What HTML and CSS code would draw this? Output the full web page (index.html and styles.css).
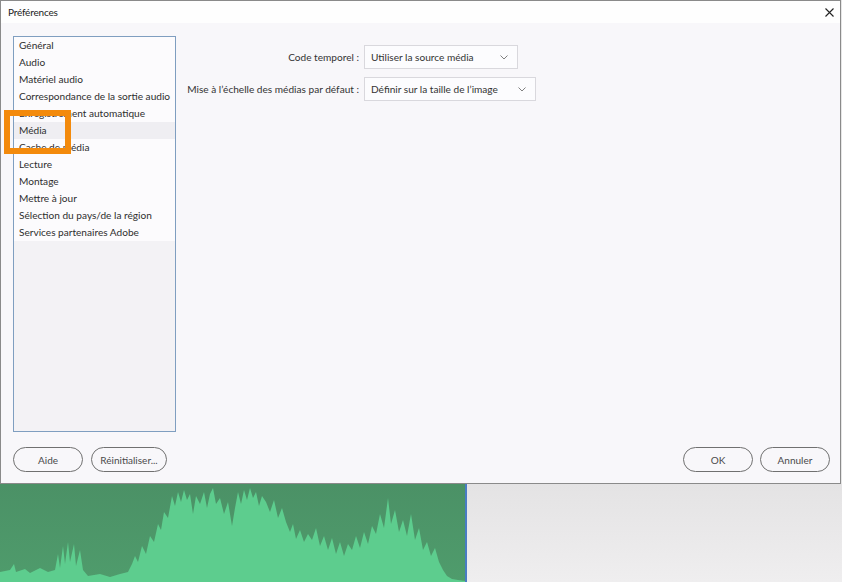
FILE: index.html
```html
<!DOCTYPE html>
<html lang="fr">
<head>
<meta charset="utf-8">
<title>Préférences</title>
<link rel="stylesheet" href="styles.css">
</head>
<body>
<div class="screen">
  <div class="top">
    <div class="dialog">
      <div class="titlebar">
        <span class="title">Préférences</span>
        <button class="close" aria-label="Fermer">
          <svg width="9" height="9" viewBox="0 0 9 9"><path d="M0.5 0.5 L8.5 8.5 M8.5 0.5 L0.5 8.5" stroke="#222" stroke-width="1.1" fill="none"/></svg>
        </button>
      </div>
      <div class="content">
        <div class="main">
          <div class="sidebar">
            <ul class="list">
              <li>Général</li>
              <li>Audio</li>
              <li>Matériel audio</li>
              <li>Correspondance de la sortie audio</li>
              <li>Enregistrement automatique</li>
              <li class="selected">Média</li>
              <li>Cache de média</li>
              <li>Lecture</li>
              <li>Montage</li>
              <li>Mettre à jour</li>
              <li>Sélection du pays/de la région</li>
              <li>Services partenaires Adobe</li>
            </ul>
          </div>
          <div class="form">
            <span class="label"><span>Code temporel :</span></span>
            <div class="select select-a"><span>Utiliser la source média</span>
              <svg width="8" height="5" viewBox="0 0 8 5"><path d="M0.5 0.5 L4 4 L7.5 0.5" stroke="#808080" stroke-width="1" fill="none"/></svg>
            </div>
            <span class="label"><span>Mise à l’échelle des médias par défaut :</span></span>
            <div class="select select-b"><span>Définir sur la taille de l’image</span>
              <svg width="8" height="5" viewBox="0 0 8 5"><path d="M0.5 0.5 L4 4 L7.5 0.5" stroke="#808080" stroke-width="1" fill="none"/></svg>
            </div>
          </div>
        </div>
        <div class="footer">
          <div class="group">
            <button class="btn btn-sm">Aide</button>
            <button class="btn btn-lg">Réinitialiser...</button>
          </div>
          <div class="group group-right">
            <button class="btn btn-sm">OK</button>
            <button class="btn btn-sm">Annuler</button>
          </div>
        </div>
      </div>
      <div class="highlight"></div>
    </div>
    <div class="edge"></div>
  </div>
  <div class="bottom">
    <div class="wave">
      <svg width="465" height="98" viewBox="0 0 465 98" preserveAspectRatio="none">
        <polygon fill="#5dcd8e" points="0,98 0,88 10,86 14,80 16,88 25,85 30,89 40,84 48,88 55,86 58,70 60,84 63,62 65,80 68,58 70,78 74,60 76,82 80,66 83,86 88,92 100,90 110,93 120,90 128,88 132,80 135,72 138,78 142,62 146,70 150,52 154,58 158,40 161,46 164,28 168,34 172,12 175,22 178,8 181,18 184,6 187,16 190,10 193,30 196,12 200,20 204,8 207,24 210,10 213,4 216,20 220,14 224,30 228,18 232,42 235,24 238,8 241,20 244,6 247,16 250,4 253,14 256,8 259,22 262,12 266,18 270,28 274,16 278,34 282,24 286,38 290,48 293,40 296,55 300,46 304,58 308,50 312,56 316,44 320,62 324,52 328,66 332,54 336,70 340,58 344,72 348,60 352,66 356,52 360,64 364,48 368,60 372,42 376,50 380,30 384,44 388,14 391,40 395,26 399,48 403,36 407,52 411,30 415,56 419,44 423,66 427,58 431,72 435,64 439,78 443,86 447,92 452,95 458,96 465,97 465,98"/>
      </svg>
    </div>
    <div class="cursor"></div>
    <div class="empty"></div>
  </div>
</div>
</body>
</html>
```

FILE: styles.css
```css
html, body {
  margin: 0;
  padding: 0;
}
body {
  width: 842px;
  height: 582px;
  overflow: hidden;
  background: #ebebeb;
  font-family: Lato, "Open Sans", sans-serif;
  font-size: 10.1px;
  color: #2b2b2b;
}
.screen {
  display: flex;
  flex-direction: column;
  width: 842px;
  height: 582px;
}
.top {
  display: flex;
  height: 484px;
}
.dialog {
  position: relative;
  width: 841px;
  height: 484px;
  box-sizing: border-box;
  border: 1px solid #8a8a8a;
  background: #f8f7fa;
  display: flex;
  flex-direction: column;
}
.edge {
  flex: 1;
  background: #e6e6e6;
}
.titlebar {
  height: 22px;
  background: #fefefe;
  display: flex;
  align-items: center;
  justify-content: space-between;
  padding: 0 6px 0 7px;
}
.title {
  font-size: 10px;
  letter-spacing: -0.2px;
  color: #1c1c1c;
}
.close {
  border: 0;
  background: none;
  padding: 0;
  width: 9px;
  height: 9px;
  display: flex;
}
.content {
  flex: 1;
  display: flex;
  flex-direction: column;
  padding: 13px 10px 11px 12px;
  gap: 15px;
  min-height: 0;
}
.main {
  flex: 1;
  display: flex;
  min-height: 0;
}
.sidebar {
  width: 163px;
  box-sizing: border-box;
  border: 1px solid #7f9ec0;
  background: #f3f2f5;
}
.list {
  list-style: none;
  margin: 0;
  padding: 0;
  background: #fcfbfd;
}
.list li {
  height: 17px;
  line-height: 16px;
  padding-left: 5px;
  white-space: nowrap;
  color: #2e2e2e;
}
.list li.selected {
  background: #efeef2;
}
.form {
  margin: 9px 0 0 10px;
  display: grid;
  grid-template-columns: 173px auto;
  column-gap: 5px;
  row-gap: 8px;
  align-content: start;
  align-items: center;
}
.label {
  display: flex;
  justify-content: flex-end;
  white-space: nowrap;
  color: #333;
}
.select {
  height: 24px;
  box-sizing: border-box;
  border: 1px solid #d9d8dd;
  background: #fcfcfe;
  display: flex;
  align-items: center;
  justify-content: space-between;
  padding: 0 9px 0 6px;
  color: #333;
}
.select-a { width: 154px; }
.select-b { width: 172px; }
.footer {
  height: 25px;
  display: flex;
  justify-content: space-between;
}
.group {
  display: flex;
  gap: 8px;
}
.group-right {
  gap: 7px;
}
.btn {
  height: 25px;
  box-sizing: border-box;
  border: 1px solid #707070;
  border-radius: 13px;
  background: transparent;
  font-family: inherit;
  font-size: 10px;
  color: #4a4a4a;
  padding: 0;
}
.btn-sm { width: 70px; }
.btn-lg { width: 76px; }
.highlight {
  position: absolute;
  left: 3px;
  top: 109px;
  width: 67px;
  height: 44px;
  box-sizing: border-box;
  border: 6px solid #f38a0c;
}
.bottom {
  display: flex;
  height: 98px;
}
.wave {
  width: 465px;
  height: 98px;
  background: linear-gradient(#4b9166, #4f9c6c);
}
.wave svg {
  display: block;
}
.cursor {
  width: 2px;
  background: #4a7cc4;
}
.empty {
  flex: 1;
  background: linear-gradient(#e4e3e4, #efeeef);
}
```
